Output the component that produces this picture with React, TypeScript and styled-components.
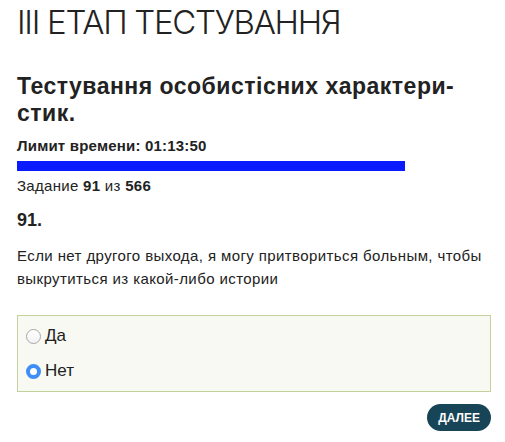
import { useState } from 'react';
import { createGlobalStyle, styled } from 'styled-components';

const GlobalStyle = createGlobalStyle`
  body {
    margin: 0;
    background: #ffffff;
    color: #222222;
    font-family: 'Liberation Sans', Arial, sans-serif;
  }
`;

const answers = ['Да', 'Нет'];

const App = () => {
  const [selected, setSelected] = useState(1);
  const current = 91;
  const total = 566;

  return (
    <Page>
      <GlobalStyle />
      <StageTitle>III ЕТАП ТЕСТУВАННЯ</StageTitle>
      <TestTitle>
        Тестування особистісних характери-
        <br />
        стик.
      </TestTitle>
      <TimeLimit>Лимит времени: 01:13:50</TimeLimit>
      <ProgressBar style={{ width: 388 }} />
      <Counter>
        Задание <b>{current}</b> из <b>{total}</b>
      </Counter>
      <QuestionNumber>{current}.</QuestionNumber>
      <QuestionText>
        Если нет другого выхода, я могу притвориться больным, чтобы выкрутиться
        из какой-либо истории
      </QuestionText>
      <AnswerBox>
        {answers.map((answer, index) => (
          <AnswerRow key={answer}>
            <Radio
              type="radio"
              name="answer"
              checked={selected === index}
              onChange={() => setSelected(index)}
            />
            {answer}
          </AnswerRow>
        ))}
      </AnswerBox>
      <Footer>
        <NextButton>Далее</NextButton>
      </Footer>
    </Page>
  );
};

export default App;

const Page = styled.div`
  display: flex;
  flex-direction: column;
  padding: 0 14px 0 17px;
`;

const StageTitle = styled.h1`
  margin: 2px 0 0;
  font-family: Inter, 'Liberation Sans', sans-serif;
  font-weight: 300;
  font-size: 33px;
  line-height: 40px;
  letter-spacing: -1.3px;
  color: #222222;
`;

const TestTitle = styled.h2`
  margin: 31px 0 0;
  font-family: 'Liberation Sans', Arial, sans-serif;
  font-weight: 700;
  font-size: 23px;
  line-height: 27px;
  letter-spacing: 0.5px;
  color: #222222;
`;

const TimeLimit = styled.div`
  margin-top: 10px;
  font-weight: 700;
  font-size: 15px;
  line-height: 18px;
  letter-spacing: 0.2px;
`;

const ProgressBar = styled.div`
  margin-top: 6px;
  height: 10px;
  background: #0a1cff;
`;

const Counter = styled.div`
  margin-top: 6px;
  font-size: 15px;
  line-height: 18px;
  letter-spacing: 0.3px;
`;

const QuestionNumber = styled.div`
  margin-top: 14px;
  font-weight: 700;
  font-size: 18px;
  line-height: 22px;
`;

const QuestionText = styled.p`
  margin: 13px 0 0;
  font-size: 15px;
  line-height: 23px;
  letter-spacing: 0.4px;
`;

const AnswerBox = styled.div`
  margin-top: 25px;
  display: flex;
  flex-direction: column;
  gap: 11px;
  padding: 8px 8px;
  border: 1px solid #c3d29c;
  background: #f7f9f2;
`;

const AnswerRow = styled.label`
  display: flex;
  align-items: center;
  gap: 4px;
  font-size: 17px;
  line-height: 24px;
  cursor: pointer;
`;

const Radio = styled.input`
  appearance: none;
  margin: 0;
  width: 15px;
  height: 15px;
  box-sizing: border-box;
  border-radius: 50%;
  border: 1px solid #a8a8a8;
  background: linear-gradient(#ffffff, #f2f2f2);
  cursor: pointer;

  &:checked {
    border: 4.5px solid #3d8ef6;
    background: #ffffff;
  }
`;

const Footer = styled.div`
  display: flex;
  justify-content: flex-end;
  margin-top: 12px;
`;

const NextButton = styled.button`
  height: 27px;
  padding: 0 11px;
  border: none;
  border-radius: 14px;
  background: #184457;
  color: #ffffff;
  font-family: 'Liberation Sans', Arial, sans-serif;
  font-weight: 700;
  font-size: 12px;
  text-transform: uppercase;
  cursor: pointer;
`;
